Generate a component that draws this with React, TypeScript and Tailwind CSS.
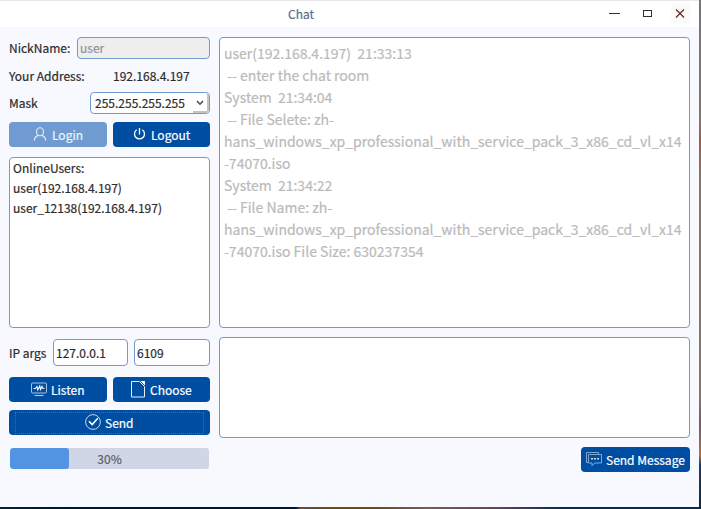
import type { ReactNode } from "react";

const log = [
  "user(192.168.4.197)  21:33:13",
  " -- enter the chat room",
  "System  21:34:04",
  " -- File Selete: zh-",
  "hans_windows_xp_professional_with_service_pack_3_x86_cd_vl_x14",
  "-74070.iso",
  "System  21:34:22",
  " -- File Name: zh-",
  "hans_windows_xp_professional_with_service_pack_3_x86_cd_vl_x14",
  "-74070.iso File Size: 630237354",
];

function Button({ className, children }: { className: string; children: ReactNode }) {
  return (
    <button className={`flex h-[25px] items-center rounded-[4px] leading-[20px] whitespace-pre ${className}`}>
      {children}
    </button>
  );
}

const UserIcon = () => (
  <svg width="14" height="15" viewBox="0 0 14 15" fill="none" stroke="#e3edf8" strokeWidth="1.1">
    <ellipse cx="7" cy="4.8" rx="3.5" ry="4" />
    <path d="M1.3 13.6c.2-3 1.8-4.6 4-5.2M12.7 13.6c-.2-3-1.8-4.6-4-5.2" />
  </svg>
);
const PowerIcon = () => (
  <svg width="13" height="13" viewBox="0 0 13 13" fill="none" stroke="#fff" strokeWidth="1.3">
    <path d="M6.5 0v6.5M3.7 1.8a5 5 0 1 0 5.6 0" />
  </svg>
);
const MonitorIcon = () => (
  <svg width="16" height="15" viewBox="0 0 16 15" fill="none" stroke="#a9c4e2" strokeWidth="1">
    <rect x=".5" y="1" width="15" height="10" rx="1" />
    <path d="M3.5 13.5h9" strokeWidth="1.2" />
    <path d="M2.5 6.5h2l1.5-2 .8 3.5 2-4 .7 3.5L11 4.5l.6 1.8h2" stroke="#fff" strokeWidth="1.1" />
  </svg>
);
const FileIcon = () => (
  <svg width="14" height="17" viewBox="0 0 14 17" fill="none" stroke="#e6eef8" strokeWidth="1">
    <path d="M8.5.5h-8v15.5h13V5.5" />
    <path d="M8.5.5l5 5" />
    <path d="M9.5 0H14v4.5z" fill="#fff" stroke="none" />
  </svg>
);
const CheckIcon = () => (
  <svg width="16" height="16" viewBox="0 0 16 16" fill="none" stroke="#c3d6ec" strokeWidth="1">
    <circle cx="8" cy="8" r="7.4" />
    <path d="M4 7.3l3.2 3.2 5.6-6.2" stroke="#fff" strokeWidth="1.6" />
  </svg>
);
const ChatIcon = () => (
  <svg width="16" height="15" viewBox="0 0 16 15" fill="none" stroke="#7fa6d0" strokeWidth="1">
    <path d="M2.5 10.5h-2V.5h12v2" />
    <path d="M2.5 2.5h13v8.5H8.8L6 13.8V11H2.5z" />
    <path d="M5.2 6.7h1.6M8.2 6.7h1.6M11.2 6.7h1.6" stroke="#fff" strokeWidth="1.4" />
  </svg>
);

export default function App() {
  return (
    <div className="flex h-[509px] w-[701px] flex-col overflow-hidden bg-[#82766d] text-[12px] text-[#2b2b2b] [-webkit-text-stroke:0.2px] [font-family:'Noto_Sans_CJK_SC',sans-serif]">
      <div className="flex h-[507px]">
        <div className="flex w-[699px] flex-col bg-[#f7f9ff]">
          <header className="flex h-[27px] border-t border-[#e9e9e9] bg-white">
            <div className="w-[288px]" />
            <h1 className="w-[319px] pt-[3px] leading-[20px] text-[#5d6d8a]">Chat</h1>
            <div className="flex items-center pb-px">
              <svg width="84" height="20" viewBox="0 0 84 20" fill="none" stroke="#303030">
                <rect x="64" y="0" width="19" height="19" rx="2" fill="#fafafa" stroke="none" />
                <path d="M2 9.5h11" />
                <rect x="36.5" y="6.5" width="8" height="6" />
                <path d="M69 5.5l8 8M77 5.5l-8 8" stroke="#6b2b2b" strokeWidth="1.3" />
              </svg>
            </div>
          </header>
          <main className="flex gap-[9px] pt-[10px] pl-[9px]">
            <section className="flex w-[201px] flex-col">
              <div className="flex h-[22px] items-center justify-between">
                <label>NickName:</label>
                <div className="h-[22px] w-[133px] rounded-[4px] border border-[#6f9bd1] bg-[#eeeeee] pl-[2px] leading-[20px] text-[#949494]">user</div>
              </div>
              <div className="mt-[7px] flex h-[20px] leading-[20px]">
                <span className="w-[104px]">Your Address:</span>
                <span>192.168.4.197</span>
              </div>
              <div className="mt-[6px] flex h-[22px] items-center justify-between">
                <label>Mask</label>
                <div className="flex h-[22px] w-[120px] justify-between rounded-[4px] border border-[#6f9bd1] bg-white pl-[4px] leading-[20px]">
                  <span>255.255.255.255</span>
                  <span className="flex w-[16px] items-center justify-center rounded-br-[3px] border-r-2 border-b-2 border-[#c4c4c4] pt-[2px]">
                    <svg width="8" height="6" viewBox="0 0 8 6" fill="none" stroke="#4b4b63" strokeWidth="1.6"><path d="M1 1l3 3.2L7 1" /></svg>
                  </span>
                </div>
              </div>
              <div className="mt-[8px] flex gap-[6px]">
                <Button className="w-[98px] gap-[5px] bg-[#6f9bd1] pl-[24px] text-[#eef4fb]"><UserIcon />Login</Button>
                <Button className="w-[97px] gap-[5px] bg-[#004ea1] pl-[20px] text-white"><PowerIcon />Logout</Button>
              </div>
              <div className="mt-[10px] h-[171px] rounded-[4px] border border-[#6f9bd1] bg-white pl-[3px] leading-[20px]">
                <p>OnlineUsers:</p>
                <p>user(192.168.4.197)</p>
                <p>user_12138(192.168.4.197)</p>
              </div>
              <div className="mt-[11px] flex h-[27px] items-center leading-[20px]">
                <label className="w-[44px]">IP args</label>
                <div className="h-[27px] w-[75px] rounded-[4px] border border-[#6f9bd1] bg-white pt-[3px] pl-[2px]">127.0.0.1</div>
                <div className="ml-[6px] h-[27px] w-[76px] rounded-[4px] border border-[#6f9bd1] bg-white pt-[3px] pl-[2px]">6109</div>
              </div>
              <div className="mt-[11px] flex gap-[6px]">
                <Button className="w-[98px] gap-[4px] bg-[#004ea1] pl-[22px] text-white"><MonitorIcon />Listen</Button>
                <Button className="w-[97px] gap-[5px] bg-[#004ea1] pl-[18px] text-white"><FileIcon />Choose</Button>
              </div>
              <div className="mt-[8px] flex h-[25px] items-center rounded-[4px] bg-[#004ea1] px-[6px]">
                <button className="flex h-[22px] w-full items-center gap-[4px] border border-dotted border-[#596a7c] pl-[69px] leading-[20px] text-white"><span className="-mt-[2px]"><CheckIcon /></span>Send</button>
              </div>
              <div className="mx-px mt-[13px] grid h-[21px] overflow-hidden rounded-[3px] bg-[#d0d6e6]">
                <div className="col-start-1 row-start-1 h-[21px] w-[59px] rounded-[3px] bg-[#5294e2]" />
                <div className="col-start-1 row-start-1 text-center leading-[21px] text-[#5c616c]">30%</div>
              </div>
            </section>
            <section className="flex w-[471px] flex-col">
              <div className="h-[291px] rounded-[4px] border border-[#6f9bd1] bg-white pt-[4px] pl-[4px] text-[14px] leading-[22px] text-[#bababa]">
                {log.map((line, i) => (
                  <p key={i} className="whitespace-pre">{line}</p>
                ))}
              </div>
              <div className="mt-[9px] h-[101px] rounded-[4px] border border-[#6f9bd1] bg-white" />
              <div className="mt-[9px] flex justify-end">
                <Button className="w-[109px] gap-[4px] bg-[#004ea1] pl-[5px] text-white"><ChatIcon />Send Message</Button>
              </div>
            </section>
          </main>
        </div>
        <div className="w-[2px] bg-[linear-gradient(#77747a_0px,#82766d_120px,#a35d42_140px,#82766d_180px,#82766d_400px,#765b67_425px,#a57845_455px,#223c58_465px,#102a40_507px)]" />
      </div>
      <div className="h-[2px] bg-[linear-gradient(90deg,#062330_0px,#00152b_80px,#00152b_296px,#6b493d_300px,#65500c_335px,#65500c_370px,#795a60_430px,#62455c_500px,#0b2b46_560px,#0b2b46_701px)]" />
    </div>
  );
}
